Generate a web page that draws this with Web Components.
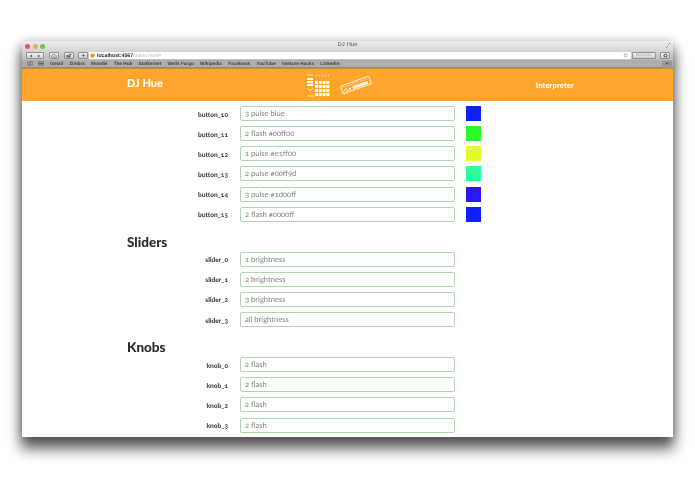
<!DOCTYPE html>
<html><head><meta charset="utf-8"><title>DJ Hue</title>
<style>
html,body{margin:0;padding:0;background:#fff;overflow:hidden;height:494px}
body{font-family:"Lato","Liberation Sans",sans-serif;padding:41px 0 0 22px;box-sizing:border-box;text-rendering:geometricPrecision}
</style></head><body>
<browser-window>
  <browser-chrome slot="chrome"></browser-chrome>
  <dj-header></dj-header>
  <dj-content>
    <map-row label="button_10" value="3 pulse blue" color="#0f1ffb"></map-row>
    <map-row label="button_11" value="2 flash #00ff00" color="#2bfb2b"></map-row>
    <map-row label="button_12" value="1 pulse #e1ff00" color="#e2fb2d"></map-row>
    <map-row label="button_13" value="2 pulse #00ff9d" color="#2efb9e"></map-row>
    <map-row label="button_14" value="3 pulse #1d00ff" color="#2a18fb"></map-row>
    <map-row label="button_15" value="2 flash #0000ff" color="#0f1ffb"></map-row>
    <section-title>Sliders</section-title>
    <map-row label="slider_0" value="1 brightness"></map-row>
    <map-row label="slider_1" value="2 brightness"></map-row>
    <map-row label="slider_2" value="3 brightness"></map-row>
    <map-row label="slider_3" value="all brightness"></map-row>
    <section-title>Knobs</section-title>
    <map-row label="knob_0" value="2 flash"></map-row>
    <map-row label="knob_1" value="2 flash"></map-row>
    <map-row label="knob_2" value="2 flash"></map-row>
    <map-row label="knob_3" value="2 flash"></map-row>
  </dj-content>
</browser-window>
<script>
function def(name, html, init){
  customElements.define(name, class extends HTMLElement{
    constructor(){super();this.attachShadow({mode:'open'}).innerHTML=html;}
    connectedCallback(){ if(init) init(this,this.shadowRoot); }
  });
}
def('browser-window',`<style>
:host{display:flex;flex-direction:column;width:651px;height:396px;background:#fff;overflow:visible;filter:blur(.45px);
box-shadow:0 11px 13px 1px rgba(0,0,0,.62),0 1px 11px rgba(0,0,0,.28)}
.clip{display:flex;flex-direction:column;height:396px;overflow:hidden;border-radius:3px 3px 0 0}
</style><div class="clip"><slot name="chrome"></slot><slot></slot></div>`);

def('browser-chrome',`<style>
:host{display:block;font-family:"Liberation Sans",sans-serif;color:#333;height:27px;flex:none}
.title{height:10px;background:linear-gradient(#ececec,#d6d6d6);display:flex;align-items:center;position:relative}
.lights{display:flex;gap:2.5px;margin-left:3px}
.lights i{width:5px;height:5px;border-radius:50%;display:block}
.name{position:absolute;left:0;right:0;text-align:center;font-size:6px;color:#555;top:1px}
.expand{position:absolute;right:2px;top:1px}
.tools{height:9px;background:linear-gradient(#d4d4d4,#bdbdbd);display:flex;align-items:center;padding:0 3px 0 4px}
.b{height:7px;background:linear-gradient(#f2f2f2,#cfcfcf);border:.5px solid #8f8f8f;border-radius:1px;box-sizing:border-box;display:flex;align-items:center;justify-content:center;flex:none}
.url{flex:1;height:7px;background:#fff;border-radius:1px;display:flex;align-items:center;font-size:5px;margin:0 1px;position:relative}
.url i{width:5px;height:5px;border-radius:50%;background:#f08a12;margin:0 2px 0 1px;display:block;border:.5px solid #f5c04a;box-sizing:border-box}
.url b{font-weight:700;color:#222;font-size:5.2px}
.url span{color:#bbb;font-size:5.2px}
.url svg{position:absolute;right:3px;top:1px}
.marks{height:8px;background:#adadad;display:flex;align-items:center;padding:0 0 0 5px;font-size:4.7px;font-weight:700;color:#444;position:relative;border-bottom:.5px solid #8c8c8c;box-sizing:border-box}
.marks span{margin-right:6.2px;white-space:nowrap}
.ic{display:flex;gap:5px;margin-right:6px;align-items:center}
.add{position:absolute;right:1px;top:.5px;width:10px;height:7.5px;background:#999;display:flex;align-items:center;justify-content:center;font-size:5px;color:#333;line-height:1}
</style>
<div class="title"><div class="lights"><i style="background:#e2555a"></i><i style="background:#e0b04a"></i><i style="background:#6cbf5a"></i></div>
<div class="name">DJ Hue</div>
<svg class="expand" width="6" height="7" viewBox="0 0 6 7"><path d="M1 6L2.6 4.4M3.4 2.6L5 1" stroke="#888" fill="none"/></svg></div>
<div class="tools">
<div class="b" style="width:18px"><svg width="12" height="4" viewBox="0 0 12 4"><path d="M3 .5L.8 2 3 3.5zM9 .5L11.2 2 9 3.5z" fill="#666"/></svg></div>
<div class="b" style="width:10px;margin-left:5px"><svg width="6" height="5" viewBox="0 0 6 5"><path d="M1.2 4.2C0 4.2 0 2.6 1.2 2.6 1.5.8 4.2.8 4.6 2.4 6 2.4 6 4.2 4.8 4.2z" fill="none" stroke="#666" stroke-width=".6"/></svg></div>
<div class="b" style="width:10px;margin-left:5px"><svg width="6" height="5" viewBox="0 0 6 5"><path d="M.5 1.5V4.5H4.5V3M2 3C2 1.6 3 1.2 4 1.2V.3L5.7 1.6 4 2.9V2C3 2 2.4 2.3 2 3z" fill="#666"/></svg></div>
<div class="b" style="width:10px;margin-left:4px"><svg width="5" height="5" viewBox="0 0 5 5"><path d="M2.5 .7V4.3M.7 2.5H4.3" stroke="#666" stroke-width=".8"/></svg></div>
<div class="url"><i></i><b>localhost:4567</b><span>/index.html#</span><svg width="5" height="5" viewBox="0 0 5 5"><path d="M4 2.5A1.5 1.5 0 1 1 3.2 1.2M3 .3V1.5H4.2" fill="none" stroke="#777" stroke-width=".5"/></svg></div>
<div class="b" style="width:24px;font-size:4.8px;color:#bbb;font-weight:700">Reader</div>
<div class="b" style="width:10px;margin-left:4px"><svg width="5" height="5" viewBox="0 0 5 5"><circle cx="2.5" cy="2.5" r="1.5" fill="none" stroke="#444" stroke-width="1"/></svg></div>
</div>
<div class="marks"><div class="ic"><svg width="6" height="5" viewBox="0 0 7 5"><path d="M.5.5H3.5V4.5H.5zM3.5.5H6.5V4.5H3.5z" fill="none" stroke="#555" stroke-width=".6"/></svg><svg width="6" height="5" viewBox="0 0 6 5"><path d="M0 1H6M0 2.5H6M0 4H6" stroke="#555" stroke-width=".8"/></svg></div>
<span>Gmail</span><span>Zimbra</span><span>Moodle</span><span>The Hub</span><span>Stalkernet</span><span>Wells Fargo</span><span>Wikipedia</span><span>Facebook</span><span>YouTube</span><span>Venture Hacks</span><span>LinkedIn</span>
<div class="add">+</div></div>`);

def('dj-header',`<style>
:host{display:grid;grid-template-columns:207px 214px 1fr;align-items:center;height:33px;flex:none;background:#ffa42c;color:#fff;border-top:.5px solid #c98a30;box-sizing:border-box;font-family:"Lato",sans-serif}
h1{margin:0 0 0 105px;font-size:11px;font-weight:900;white-space:nowrap;position:relative;top:-1.5px}
.mid{display:flex;gap:10px;align-items:center;margin-left:77px}
.r{font-size:7.8px;font-weight:900;text-align:right;padding-right:99px;white-space:nowrap}
</style>
<h1>DJ Hue</h1>
<div class="mid">
<svg width="24" height="23" viewBox="0 0 24 23">
 <g fill="#fff"><rect x="1" y="4" width="6" height="2"/><rect x="1" y="7" width="6" height="2"/><rect x="1" y="10" width="6" height="2"/></g>
 <g fill="#fff" id="g"><rect x="9" y="7" width="3" height="3"/><rect x="12.8" y="7" width="3" height="3"/><rect x="16.6" y="7" width="3" height="3"/><rect x="20.4" y="7" width="3" height="3"/>
 <rect x="9" y="11" width="3" height="3"/><rect x="12.8" y="11" width="3" height="3"/><rect x="16.6" y="11" width="3" height="3"/><rect x="20.4" y="11" width="3" height="3"/>
 <rect x="9" y="15" width="3" height="3"/><rect x="12.8" y="15" width="3" height="3"/><rect x="16.6" y="15" width="3" height="3"/><rect x="20.4" y="15" width="3" height="3"/>
 <rect x="9" y="19" width="3" height="3"/><rect x="12.8" y="19" width="3" height="3"/><rect x="16.6" y="19" width="3" height="3"/><rect x="20.4" y="19" width="3" height="3"/></g>
 <path d="M1 1H7M10 2.5l1-2M13 2.5l1-2M16 2.5l1-2M19 2.5l1-2M22 2.5l1-2M1 14l3 3 3-3M1 22H8" stroke="#fff" stroke-width=".7" fill="none"/>
</svg>
<svg width="32" height="18" viewBox="0 0 32 18">
 <g transform="rotate(-20 16 9)"><rect x="1" y="5" width="30" height="8" fill="none" stroke="#fff" stroke-width=".8"/>
 <path d="M3 7H29" stroke="#fff" stroke-width=".7" stroke-dasharray="1 1"/><rect x="12" y="9" width="16" height="3" fill="#fff" opacity=".85"/>
 <circle cx="5" cy="10.5" r="1.5" fill="none" stroke="#fff" stroke-width=".7"/><circle cx="9" cy="10.5" r="1.2" fill="#fff"/></g>
</svg>
</div>
<div class="r">Interpreter</div>`);

def('dj-content',`<style>
:host{display:block;flex:1;min-height:0;overflow:hidden;padding-top:5px;background:#fff}
</style><slot></slot>`);

def('section-title',`<style>
:host{display:block;font-family:"Lato",sans-serif;font-weight:900;font-size:13.5px;line-height:15px;color:#2a2a2a;margin:13px 0 2px 105px}
</style><slot></slot>`);

def('map-row',`<style>
:host{display:grid;grid-template-columns:206px 215px 15px;align-items:center;height:15px;margin-bottom:5.15px;color:#333}
.l{font-family:"Lato",sans-serif;font-weight:900;font-size:6.6px;text-align:right;color:#444;padding-top:2px;font-feature-settings:"onum"}
.i{margin-left:12px;width:215px;height:15px;box-sizing:border-box;border:1px solid #b3d4b3;border-radius:2px;font-family:"Lato",sans-serif;font-weight:400;font-size:7.6px;line-height:13px;padding-left:4px;color:#808080;background:#fff;white-space:nowrap;font-feature-settings:"onum"}
.s{margin-left:23px;width:15px;height:15px;display:block}
</style><div class="l"></div><div class="i"></div><div class="s"></div>`,(el,r)=>{
  r.querySelector('.l').textContent=el.getAttribute('label');
  r.querySelector('.i').textContent=el.getAttribute('value');
  const c=el.getAttribute('color'); if(c) r.querySelector('.s').style.background=c;
});
</script>
</body></html>
